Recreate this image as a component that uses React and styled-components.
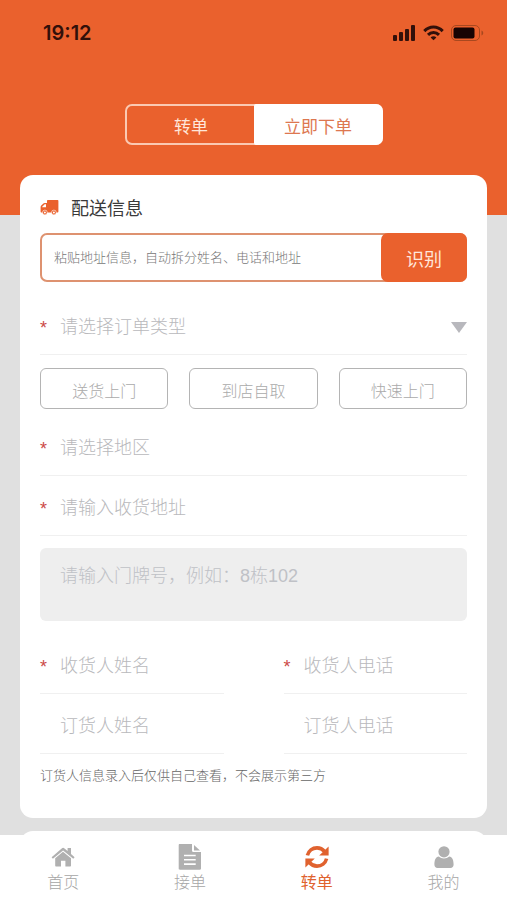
import React, { useState } from 'react';
import styled, { createGlobalStyle } from 'styled-components';

const GlobalStyle = createGlobalStyle`
    * {
        box-sizing: border-box;
    }

    body {
        margin: 0;
        background: #e0e0e0;
        font-family: 'Liberation Sans', 'Noto Sans CJK SC', sans-serif;
    }

    button, input, select, textarea {
        font-family: inherit;
        font-weight: inherit;
        margin: 0;
    }
`;

const Container = styled.div`
    display: flex;
    flex-direction: column;
    height: 100vh;
    font-weight: 300;
    overflow: hidden;
`;

const Main = styled.main`
    flex: 1 1 auto;
    min-height: 0;
    overflow-y: auto;
    scrollbar-width: none;
`;

const Header = styled.header`
    display: flex;
    flex-direction: column;
    align-items: center;
    background: #ea612d;
    padding-bottom: 70px;
`;

const StatusBar = styled.div`
    display: flex;
    justify-content: space-between;
    align-items: center;
    width: 100%;
    height: 66px;
    padding: 0 23px 0 43px;
    margin-bottom: 38px;
`;

const Time = styled.span`
    font-family: Inter, sans-serif;
    font-size: 20px;
    font-weight: 600;
    color: #32100a;
`;

const StatusIcons = styled.div`
    display: flex;
    align-items: center;
    gap: 7px;
`;

const Segment = styled.div`
    display: flex;
    width: 258px;
    height: 41px;
    border: 2px solid #fbc9b2;
    border-radius: 7px;
    background: #ea612d;
`;

const SegmentButton = styled.button`
    flex: 1;
    border: none;
    padding: 2px 0 0;
    margin: ${({ $active }) => ($active ? '-2px' : '0')};
    border-radius: ${({ $active, $side }) => {
        if (!$active) return '5px';
        return $side === 'left' ? '7px 2px 2px 7px' : '2px 7px 7px 2px';
    }};
    background: ${({ $active }) => ($active ? '#fff' : 'transparent')};
    color: ${({ $active }) => ($active ? '#dd7750' : '#ffe6da')};
    font-size: 17px;
    font-weight: 400;
    cursor: pointer;
`;

const Card = styled.section`
    margin: ${({ $overlap }) => ($overlap ? '-40px' : '13px')} 20px 0;
    padding: 20px 20px 32px;
    border-radius: 13px;
    background: #fff;
`;

const CardTitle = styled.h2`
    display: flex;
    align-items: center;
    gap: 12px;
    height: 24px;
    margin: 0 0 14px;
    font-size: 18px;
    font-weight: 400;
    color: #3a3a3a;
`;

const PasteBox = styled.div`
    display: flex;
    height: 49px;
    margin-bottom: 13px;
    border: 2px solid #de9270;
    border-radius: 7px;
`;

const PasteInput = styled.input`
    flex: 1;
    min-width: 0;
    border: none;
    outline: none;
    background: transparent;
    padding: 0 12px;
    font-size: 13px;
    color: #333;

    &::placeholder {
        color: #777;
        opacity: 1;
    }
`;

const PasteButton = styled.button`
    width: 86px;
    margin: -2px;
    padding: 0;
    border: none;
    border-radius: 7px;
    background: #ea612d;
    color: #ffe6da;
    font-size: 18px;
    font-weight: 400;
    cursor: pointer;
`;

const Field = styled.label`
    display: flex;
    align-items: center;
    min-width: 0;
    height: 60px;
    padding-top: 5px;
    border-bottom: 1px solid #f0f0f0;
`;

const Star = styled.span`
    flex: 0 0 20px;
    height: 18px;
    font-size: 18px;
    line-height: 20px;
    font-weight: 400;
    color: #cc4a48;
`;

const FieldInput = styled.input`
    flex: 1;
    min-width: 0;
    border: none;
    outline: none;
    padding: 0;
    background: transparent;
    font-size: 18px;
    color: #333;

    &::placeholder {
        color: #b9b9bc;
        opacity: 1;
    }
`;

const FieldSelect = styled.select`
    flex: 1;
    min-width: 0;
    border: none;
    outline: none;
    padding: 0;
    appearance: none;
    background: transparent;
    font-size: 18px;
    color: #b9b9bc;
`;

const DeliveryOptions = styled.div`
    display: grid;
    grid-template-columns: repeat(3, 1fr);
    gap: 21px;
    margin: 13px 0 7px;
`;

const DeliveryButton = styled.button`
    height: 41px;
    padding: 2px 0 0;
    border: 1px solid ${({ $active }) => ($active ? '#ea612d' : '#b4b4b4')};
    border-radius: 6px;
    background: #fff;
    color: ${({ $active }) => ($active ? '#ea612d' : '#aaa')};
    font-size: 16px;
    cursor: pointer;
`;

const DoorNumber = styled.textarea`
    display: block;
    width: 100%;
    height: 73px;
    margin: 12px 0 13px;
    padding: 14px 20px;
    border: none;
    border-radius: 6px;
    outline: none;
    resize: none;
    background: #eee;
    font-size: 18px;
    line-height: 28px;
    color: #333;

    &::placeholder {
        color: #bfc1c6;
        opacity: 1;
    }
`;

const Columns = styled.div`
    display: grid;
    grid-template-columns: 1fr 1fr;
    column-gap: 60px;
`;

const Note = styled.p`
    margin: 12px 0 0;
    font-size: 13px;
    line-height: 20px;
    color: #666;
`;

const TabBar = styled.nav`
    flex: none;
    display: flex;
    height: 65px;
    background: #fff;
`;

const Tab = styled.a`
    flex: 1;
    display: flex;
    flex-direction: column;
    align-items: center;
    padding-top: 8px;
    font-size: 16px;
    line-height: 24px;
    font-weight: ${({ $active }) => ($active ? 400 : 300)};
    color: ${({ $active }) => ($active ? '#e0622f' : '#a6a6a6')};
    text-decoration: none;

    svg {
        color: ${({ $active }) => ($active ? '#e0622f' : '#b0b0b0')};
    }
`;

const SignalIcon = () => (
    <svg width="23" height="16" viewBox="0 0 23 16" fill="#32100a">
        <rect x="0" y="10" width="4" height="6" rx="1" />
        <rect x="6" y="7" width="4" height="9" rx="1" />
        <rect x="12" y="4" width="4" height="12" rx="1" />
        <rect x="18" y="0" width="4" height="16" rx="1" />
    </svg>
);

const WifiIcon = () => (
    <svg width="21" height="16" viewBox="0 0 21 16" fill="none" stroke="#32100a" strokeWidth="3">
        <path d="M1.3 6.1 C6.5 0.6 14.5 0.6 19.7 6.1" />
        <path d="M5 9.9 C8.1 6.8 12.9 6.8 16 9.9" />
        <path d="M10.5 15.2 L7.6 12.4 C9.2 10.9 11.8 10.9 13.4 12.4 Z" fill="#32100a" stroke="none" />
    </svg>
);

const BatteryIcon = () => (
    <svg width="33" height="16" viewBox="0 0 33 16" fill="none">
        <rect x="0.5" y="0.5" width="28" height="15" rx="4.5" stroke="#a8481f" />
        <rect x="2.5" y="2.5" width="21" height="11" rx="2" fill="#180403" />
        <path d="M30.5 5.5 C32.8 6.5 32.8 9.5 30.5 10.5 Z" fill="#a8481f" />
    </svg>
);

const TruckIcon = () => (
    <svg width="19" height="17" viewBox="0 0 19 17">
        <path
            fill="#ea612d"
            d="M7 1.7 C7 1.2 7.3 .9 7.8 .9 H17.6 C18.1 .9 18.4 1.2 18.4 1.7 V12.6 C18.4 13.2 18.1 13.5 17.6 13.5 H1.3 C.8 13.5 .6 13.2 .6 12.7 V8 C.6 7.4 .8 7 1.2 6.6 L3.4 4.4 C3.7 4.1 4.1 3.9 4.6 3.9 H7 Z"
        />
        <path fill="#fff" d="M2.2 8.2 V7.8 L4.7 5.3 H6 V8.2 Z" />
        <circle cx="4.9" cy="13.5" r="2.4" fill="#ea612d" stroke="#fff" strokeWidth="0.6" />
        <circle cx="13.9" cy="13.5" r="2.4" fill="#ea612d" stroke="#fff" strokeWidth="0.6" />
        <circle cx="4.9" cy="13.5" r="1" fill="#fff" />
        <circle cx="13.9" cy="13.5" r="1" fill="#fff" />
    </svg>
);

const ArrowIcon = () => (
    <svg width="16" height="11" viewBox="0 0 16 11">
        <path d="M0 0 H16 L8 11 Z" fill="#b8b8bd" />
    </svg>
);

const HomeIcon = () => (
    <svg width="24" height="28" viewBox="0 0 24 28" fill="currentColor">
        <path d="M12 8.8 L20 15.3 V22.4 C20 23.1 19.6 23.5 19 23.5 H14.4 V17.7 H10 V23.5 H5.2 C4.6 23.5 4.2 23.1 4.2 22.4 V15.3 Z" />
        <path d="M.6 14.2 L10.7 5.4 C11.6 4.6 12.6 4.6 13.5 5.4 L16.6 8.1 V5 H20 V11.1 L23.6 14.2 L22.3 15.8 L12.1 7.6 L1.9 15.8 Z" />
    </svg>
);

const FileIcon = () => (
    <svg width="24" height="28" viewBox="0 0 24 28" fill="currentColor">
        <path
            fillRule="evenodd"
            d="M1.8 1 H14 V7.5 C14 8.4 14.5 9 15.4 9 H23 V25.5 C23 26.3 22.6 26.7 21.8 26.7 H1.8 C1 26.7 .7 26.3 .7 25.5 V2.2 C.7 1.4 1 1 1.8 1 Z M6 11.7 V13.3 H17.7 V11.7 Z M6 16 V17.6 H17.7 V16 Z M6 20.3 V21.9 H17.7 V20.3 Z"
        />
        <path d="M16 2 L22 7.5 H16 Z" />
    </svg>
);

const TransferIcon = () => (
    <svg width="24" height="28" viewBox="0 0 24 28" fill="none" stroke="currentColor" strokeWidth="3.6">
        <path d="M2.4 12.4 C3.6 7.8 7.4 4.9 12 4.9 C15.1 4.9 17.7 6.2 19.6 8.5" />
        <path d="M21.6 15.6 C20.4 20.2 16.6 23.1 12 23.1 C8.9 23.1 6.3 21.8 4.4 19.5" />
        <path d="M23.6 3.4 V12.4 H14.2 Z" fill="currentColor" stroke="none" />
        <path d="M.4 24.6 V15.6 H9.8 Z" fill="currentColor" stroke="none" />
    </svg>
);

const UserIcon = () => (
    <svg width="24" height="28" viewBox="0 0 24 28" fill="currentColor">
        <circle cx="12" cy="8.8" r="5.6" />
        <path d="M6.8 13.4 C8.1 14.7 10 15.4 12 15.4 C14 15.4 15.9 14.7 17.2 13.4 C20.3 13.8 21.6 16.8 21.6 21.5 C21.6 23.8 20.3 25 18.5 25 H5.5 C3.7 25 2.4 23.8 2.4 21.5 C2.4 16.8 3.7 13.8 6.8 13.4 Z" />
    </svg>
);

const deliveryTypes = ['送货上门', '到店自取', '快速上门'];

const tabs = [
    { name: '首页', icon: HomeIcon },
    { name: '接单', icon: FileIcon },
    { name: '转单', icon: TransferIcon },
    { name: '我的', icon: UserIcon },
];

const TextField = ({ name, placeholder, required, type = 'text' }) => (
    <Field>
        <Star>{required ? '*' : ''}</Star>
        <FieldInput type={type} name={name} placeholder={placeholder} aria-label={placeholder} />
    </Field>
);

const TransferOrderPage = () => {
    const [mode, setMode] = useState('order');
    const [delivery, setDelivery] = useState(null);

    return (
        <Container lang="zh-CN">
            <GlobalStyle />
            <Main>
                <Header>
                    <StatusBar>
                        <Time>19:12</Time>
                        <StatusIcons>
                            <SignalIcon />
                            <WifiIcon />
                            <BatteryIcon />
                        </StatusIcons>
                    </StatusBar>
                    <Segment>
                        <SegmentButton $side="left" $active={mode === 'transfer'} onClick={() => setMode('transfer')}>
                            转单
                        </SegmentButton>
                        <SegmentButton $side="right" $active={mode === 'order'} onClick={() => setMode('order')}>
                            立即下单
                        </SegmentButton>
                    </Segment>
                </Header>

                <Card $overlap>
                    <CardTitle>
                        <TruckIcon />
                        配送信息
                    </CardTitle>
                    <PasteBox>
                        <PasteInput
                            name="paste"
                            placeholder="粘贴地址信息，自动拆分姓名、电话和地址"
                            aria-label="粘贴地址信息"
                        />
                        <PasteButton type="button">识别</PasteButton>
                    </PasteBox>

                    <Field>
                        <Star>*</Star>
                        <FieldSelect name="orderType" aria-label="订单类型" defaultValue="">
                            <option value="">请选择订单类型</option>
                        </FieldSelect>
                        <ArrowIcon />
                    </Field>
                    <DeliveryOptions>
                        {deliveryTypes.map((type) => (
                            <DeliveryButton
                                key={type}
                                type="button"
                                $active={delivery === type}
                                onClick={() => setDelivery(type)}
                            >
                                {type}
                            </DeliveryButton>
                        ))}
                    </DeliveryOptions>

                    <TextField name="area" placeholder="请选择地区" required />
                    <TextField name="address" placeholder="请输入收货地址" required />
                    <DoorNumber name="door" placeholder="请输入门牌号，例如：8栋102" aria-label="门牌号" />

                    <Columns>
                        <TextField name="receiver" placeholder="收货人姓名" required />
                        <TextField name="receiverPhone" type="tel" placeholder="收货人电话" required />
                        <TextField name="buyer" placeholder="订货人姓名" />
                        <TextField name="buyerPhone" type="tel" placeholder="订货人电话" />
                    </Columns>
                    <Note>订货人信息录入后仅供自己查看，不会展示第三方</Note>
                </Card>

                <Card />
            </Main>

            <TabBar>
                {tabs.map(({ name, icon: Icon }) => (
                    <Tab key={name} href="#" $active={name === '转单'}>
                        <Icon />
                        {name}
                    </Tab>
                ))}
            </TabBar>
        </Container>
    );
};

export default TransferOrderPage;
